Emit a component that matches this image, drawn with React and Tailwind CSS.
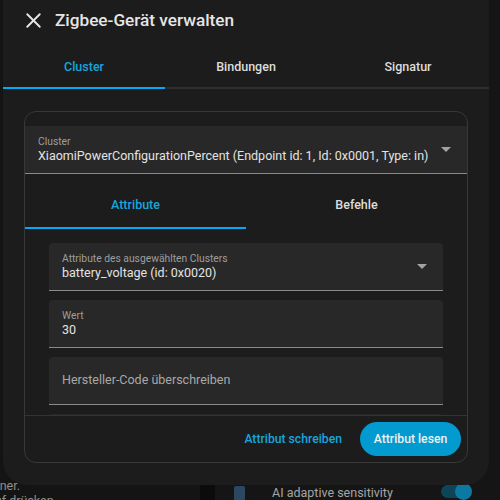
import { X } from 'lucide-react';

const font = { fontFamily: 'Roboto, "Noto Sans", sans-serif' };

function Caret() {
  return (
    <svg width="10" height="5" viewBox="0 0 10 5">
      <path d="M0 0h10L5 5z" fill="#a3a3a3" />
    </svg>
  );
}

function TextField({ label, value, placeholder, select }) {
  return (
    <div className="relative h-12 shrink-0 bg-[#282828] rounded-t-[4px] border-b border-[#8a8a8a] flex items-center pl-[13px] pr-[16px]">
      {placeholder !== undefined ? (
        <span className="text-[12.5px] text-[#a8a8a8]">{placeholder}</span>
      ) : (
        <div className="flex-1 self-stretch pt-[10px]">
          <div className="text-[10.3px] leading-[12px] text-[#9e9e9e]">{label}</div>
          <div className="text-[12.5px] leading-[16px] text-[#e3e3e3]">{value}</div>
        </div>
      )}
      {select && (
        <span className="ml-2">
          <Caret />
        </span>
      )}
    </div>
  );
}

export default function App() {
  return (
    <div className="relative w-[500px] h-[500px] overflow-hidden bg-[#111111]" style={font}>
      {/* page behind the dialog, dimmed by the scrim */}
      <div className="grid grid-cols-[200px_15px_1fr] h-full">
        <div className="flex flex-col justify-end text-[12.5px] text-[#8f8f8f] leading-[15px] bg-[#141414]">
          <div className="-ml-[10px]">einer.</div>
          <div className="-ml-[12px] -mb-[8px]">auf drücken</div>
        </div>
        <div className="bg-[#0b0b0b]" />
        <div className="flex flex-col justify-end bg-[#151515]">
          <div className="flex items-center h-[22px] -mb-[4px] pl-[19px] pr-[28px]">
            <div className="w-[11px] h-[18px] mt-[4px] bg-[#2c4762] rounded-[2px]" />
            <span className="ml-[27px] text-[12.5px] text-[#a5a5a5]">AI adaptive sensitivity</span>
            <div className="ml-auto relative w-[31px] h-[13px] mb-[4px] rounded-full bg-[#0d4558]">
              <div className="absolute right-0 -top-[2px] w-[17px] h-[17px] rounded-full bg-[#0a7aa3]" />
            </div>
          </div>
        </div>
      </div>

      {/* dialog */}
      <div className="absolute left-[3px] top-0 w-[486px] h-[485px] bg-[#1c1c1c] rounded-b-[24px] flex flex-col">
        <div className="h-[47px] flex items-start pt-[8px] pl-[18px]">
          <X size={25} strokeWidth={1.8} color="#e6e6e6" />
          <h2 className="ml-[9px] mt-[2px] text-[17.2px] leading-[21px] font-medium text-[#e6e6e6]">
            Zigbee-Gerät verwalten
          </h2>
        </div>

        <div className="grid grid-cols-3 h-[42px] border-b-2 border-[#2e2e2e] text-[12.5px] font-medium">
          <div className="relative flex items-center justify-center text-[#16a6de]">
            Cluster
            <div className="absolute left-0 right-0 -bottom-[2px] h-[2px] bg-[#03a9f4]" />
          </div>
          <div className="flex items-center justify-center text-[#dcdcdc]">Bindungen</div>
          <div className="flex items-center justify-center text-[#dcdcdc]">Signatur</div>
        </div>

        <div className="flex-1 px-[21px] pt-[22px] pb-[22px]">
          <div className="h-full border border-[#383838] rounded-[12px] overflow-hidden flex flex-col">
            <div className="pt-[14px]">
              <div className="h-12 bg-[#282828] border-b border-[#8a8a8a] flex items-center pl-[13px] pr-[16px]">
                <div className="flex-1 self-stretch pt-[10px]">
                  <div className="text-[10.3px] leading-[12px] text-[#9e9e9e]">Cluster</div>
                  <div className="text-[12.5px] leading-[16px] text-[#e3e3e3] whitespace-nowrap">
                    XiaomiPowerConfigurationPercent (Endpoint id: 1, Id: 0x0001, Type: in)
                  </div>
                </div>
                <Caret />
              </div>
            </div>

            <div className="pt-[7px]">
              <div className="grid grid-cols-2 h-12 text-[12.5px] font-medium">
                <div className="relative flex items-center justify-center text-[#16a6de]">
                  Attribute
                  <div className="absolute left-0 right-0 bottom-0 h-[2px] bg-[#03a9f4]" />
                </div>
                <div className="flex items-center justify-center text-[#dcdcdc]">Befehle</div>
              </div>
            </div>

            <div className="h-[186px] overflow-hidden px-[24px] pt-[14px] flex flex-col gap-[9px]">
              <TextField
                label="Attribute des ausgewählten Clusters"
                value="battery_voltage (id: 0x0020)"
                select
              />
              <TextField label="Wert" value="30" />
              <TextField placeholder="Hersteller-Code überschreiben" />
              <TextField placeholder="" />
            </div>

            <div className="flex-1 border-t border-[#333333] flex items-center justify-end gap-[18px] pr-[6px]">
              <button className="text-[12.2px] font-medium text-[#16a6de]">Attribut schreiben</button>
              <button className="h-[34px] w-[101px] rounded-full bg-[#039bcf] text-[12.2px] font-medium text-[#f0f0f0]">
                Attribut lesen
              </button>
            </div>
          </div>
        </div>
      </div>
    </div>
  );
}
